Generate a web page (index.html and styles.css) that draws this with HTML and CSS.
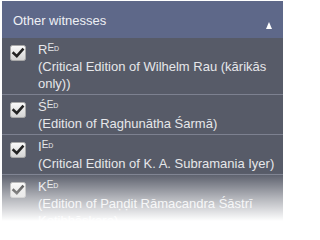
FILE: index.html
```html
<!DOCTYPE html>
<html>
<head>
<meta charset="utf-8">
<link rel="stylesheet" href="styles.css">
</head>
<body>
<div class="panel">
  <div class="header">
    <span class="title">Other witnesses</span>
    <span class="arrow"></span>
  </div>
  <div class="list">
    <div class="row">
      <svg class="check" viewBox="0 0 16 16" width="16" height="16"><defs><linearGradient id="g" x1="0" y1="0" x2="0" y2="1"><stop offset="0" stop-color="#fbfbfb"/><stop offset="1" stop-color="#d2d2d2"/></linearGradient></defs><rect x="0.5" y="0.5" width="15" height="15" rx="2" fill="url(#g)" stroke="#a8a8a8"/><path d="M3.6 8.2 L6.8 11.2 L12.6 4.6" fill="none" stroke="#222" stroke-width="2.6" stroke-linecap="square"/></svg>
      <div class="text"><div class="siglum">R<span class="ed">Ed</span></div><div class="desc">(Critical Edition of Wilhelm Rau (kārikās only))</div></div>
    </div>
    <div class="row">
      <svg class="check" viewBox="0 0 16 16" width="16" height="16"><rect x="0.5" y="0.5" width="15" height="15" rx="2" fill="url(#g)" stroke="#a8a8a8"/><path d="M3.6 8.2 L6.8 11.2 L12.6 4.6" fill="none" stroke="#222" stroke-width="2.6" stroke-linecap="square"/></svg>
      <div class="text"><div class="siglum">Ś<span class="ed">Ed</span></div><div class="desc">(Edition of Raghunātha Śarmā)</div></div>
    </div>
    <div class="row">
      <svg class="check" viewBox="0 0 16 16" width="16" height="16"><rect x="0.5" y="0.5" width="15" height="15" rx="2" fill="url(#g)" stroke="#a8a8a8"/><path d="M3.6 8.2 L6.8 11.2 L12.6 4.6" fill="none" stroke="#222" stroke-width="2.6" stroke-linecap="square"/></svg>
      <div class="text"><div class="siglum">I<span class="ed">Ed</span></div><div class="desc">(Critical Edition of K. A. Subramania Iyer)</div></div>
    </div>
    <div class="row">
      <svg class="check" viewBox="0 0 16 16" width="16" height="16"><rect x="0.5" y="0.5" width="15" height="15" rx="2" fill="url(#g)" stroke="#a8a8a8"/><path d="M3.6 8.2 L6.8 11.2 L12.6 4.6" fill="none" stroke="#222" stroke-width="2.6" stroke-linecap="square"/></svg>
      <div class="text"><div class="siglum">K<span class="ed">Ed</span></div><div class="desc">(Edition of Paṇḍit Rāmacandra Śāstrī Koṭibhāskara)</div></div>
    </div>
  </div>
  <div class="fade"></div>
</div>
</body>
</html>
```
FILE: styles.css
```css
html, body {
  margin: 0;
  padding: 0;
  background: #ffffff;
  overflow: hidden;
}
body {
  width: 285px;
  height: 231px;
  font-family: "Liberation Sans", Arial, sans-serif;
  font-size: 13px;
}
.panel {
  position: relative;
  margin: 1px 2px 0 2px;
  height: 230px;
  background: #575b68;
  overflow: hidden;
}
.header {
  height: 37px;
  background: #5e6889;
  display: flex;
  align-items: center;
  justify-content: space-between;
  padding: 0 11px 0 11px;
  color: #eef0f5;
  font-size: 13px;
}
.title {
  margin-top: 1px;
}
.arrow {
  width: 0;
  height: 0;
  border-left: 3.5px solid transparent;
  border-right: 3.5px solid transparent;
  border-bottom: 7px solid #ffffff;
  margin-top: 11px;
}
.row {
  display: flex;
  align-items: flex-start;
  padding: 3px 6px 2px 8px;
  border-bottom: 1px solid #7d8190;
  color: #e6e7ea;
}
.check {
  flex: none;
  margin-top: 4px;
  margin-right: 12px;
}
.text {
  flex: 1;
  line-height: 17px;
}
.siglum {
  height: 17px;
}
.ed {
  font-size: 10px;
  font-variant: small-caps;
  line-height: 1;
  vertical-align: 3px;
}
.fade {
  position: absolute;
  left: 0;
  right: 0;
  top: 172px;
  bottom: 0;
  background: linear-gradient(to bottom, rgba(255,255,255,0) 0px, rgba(255,255,255,0.55) 25px, #ffffff 48px);
}
```
